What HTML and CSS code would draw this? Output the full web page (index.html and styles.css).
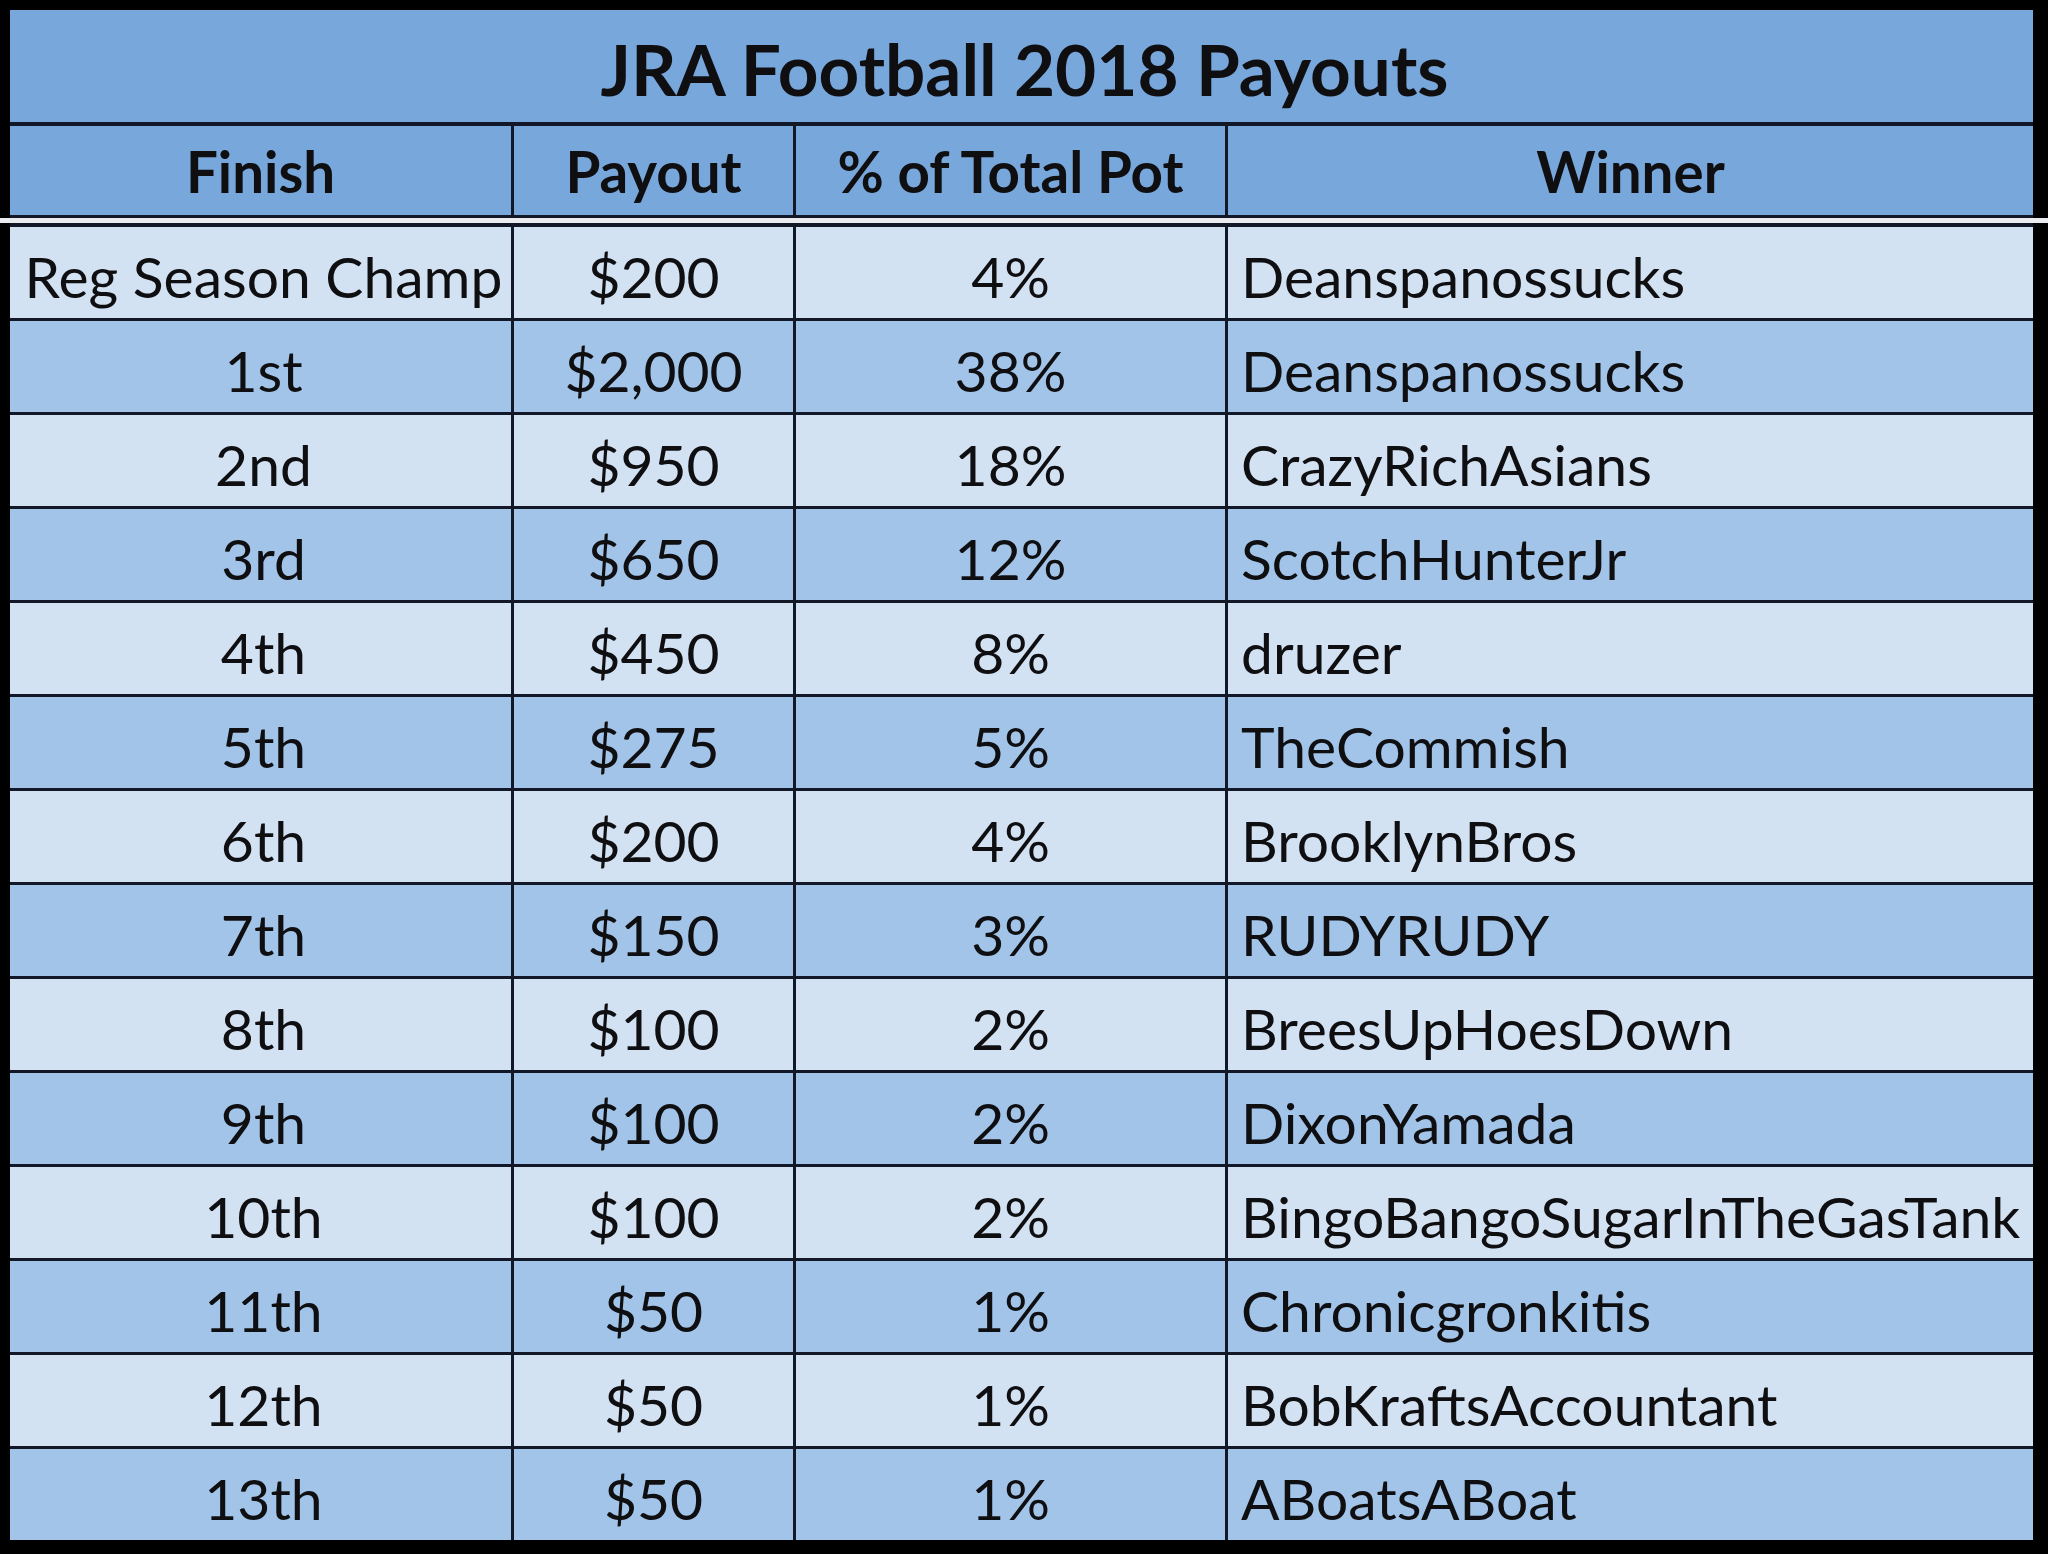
FILE: index.html
```html
<!DOCTYPE html>
<html>
<head>
<meta charset="utf-8">
<title>JRA Football 2018 Payouts</title>
<link rel="stylesheet" href="styles.css">
</head>
<body>
<div class="sheet">
  <div class="top">
    <div class="title">JRA Football 2018 Payouts</div>
    <div class="grid hdr">
      <div class="cell">Finish</div>
      <div class="cell">Payout</div>
      <div class="cell">% of Total Pot</div>
      <div class="cell">Winner</div>
    </div>
  </div>
  <div class="sep"></div>
  <div class="body">
    <div class="rows">
      <div class="grid row light"><div class="cell first">Reg Season Champ</div><div class="cell">$200</div><div class="cell">4%</div><div class="cell name">Deanspanossucks</div></div>
      <div class="grid row dark"><div class="cell first">1st</div><div class="cell">$2,000</div><div class="cell">38%</div><div class="cell name">Deanspanossucks</div></div>
      <div class="grid row light"><div class="cell first">2nd</div><div class="cell">$950</div><div class="cell">18%</div><div class="cell name">CrazyRichAsians</div></div>
      <div class="grid row dark"><div class="cell first">3rd</div><div class="cell">$650</div><div class="cell">12%</div><div class="cell name">ScotchHunterJr</div></div>
      <div class="grid row light"><div class="cell first">4th</div><div class="cell">$450</div><div class="cell">8%</div><div class="cell name">druzer</div></div>
      <div class="grid row dark"><div class="cell first">5th</div><div class="cell">$275</div><div class="cell">5%</div><div class="cell name">TheCommish</div></div>
      <div class="grid row light"><div class="cell first">6th</div><div class="cell">$200</div><div class="cell">4%</div><div class="cell name">BrooklynBros</div></div>
      <div class="grid row dark"><div class="cell first">7th</div><div class="cell">$150</div><div class="cell">3%</div><div class="cell name">RUDYRUDY</div></div>
      <div class="grid row light"><div class="cell first">8th</div><div class="cell">$100</div><div class="cell">2%</div><div class="cell name">BreesUpHoesDown</div></div>
      <div class="grid row dark"><div class="cell first">9th</div><div class="cell">$100</div><div class="cell">2%</div><div class="cell name">DixonYamada</div></div>
      <div class="grid row light"><div class="cell first">10th</div><div class="cell">$100</div><div class="cell">2%</div><div class="cell name">BingoBangoSugarInTheGasTank</div></div>
      <div class="grid row dark"><div class="cell first">11th</div><div class="cell">$50</div><div class="cell">1%</div><div class="cell name">Chronicgronkitis</div></div>
      <div class="grid row light"><div class="cell first">12th</div><div class="cell">$50</div><div class="cell">1%</div><div class="cell name">BobKraftsAccountant</div></div>
      <div class="grid row dark"><div class="cell first">13th</div><div class="cell">$50</div><div class="cell">1%</div><div class="cell name">ABoatsABoat</div></div>
    </div>
  </div>
</div>
</body>
</html>
```

FILE: styles.css
```css
html, body {
  margin: 0;
  padding: 0;
  background: #000;
}

.sheet {
  width: 2048px;
  height: 1554px;
  display: flex;
  flex-direction: column;
  background: #000;
  font-family: Lato, "Open Sans", "Liberation Sans", sans-serif;
  color: #0f0f12;
  overflow: hidden;
}

.top {
  margin: 10px 15px 0 10px;
  display: flex;
  flex-direction: column;
  gap: 4px;
  padding-bottom: 3px;
  background: #121827;
}

.title {
  height: 112px;
  background: #78a7db;
  display: flex;
  align-items: center;
  justify-content: center;
  font-weight: 700;
  font-size: 71px;
  padding-top: 5px;
  padding-left: 6px;
  box-sizing: border-box;
}

.grid {
  display: grid;
  grid-template-columns: 501px 279px 429px 805px;
  column-gap: 3px;
}

.hdr {
  height: 89px;
}

.hdr .cell {
  background: #78a7db;
  font-weight: 700;
  font-size: 56.5px;
  padding-top: 1px;
}

.cell {
  display: flex;
  align-items: center;
  justify-content: center;
  white-space: nowrap;
  overflow: visible;
  padding-top: 6px;
  box-sizing: border-box;
}

.sep {
  height: 5px;
  background: #e9ebef;
}

.body {
  flex: 1;
  padding: 0 15px 14px 10px;
}

.rows {
  display: flex;
  flex-direction: column;
  gap: 3px;
  padding-top: 4px;
  background: #121827;
}

.row {
  height: 91px;
  font-size: 57px;
}

.row.light .cell {
  background: #d3e2f3;
}

.row.dark .cell {
  background: #a2c4e9;
}

.row .cell.first {
  padding-left: 6px;
}

.row .cell.name {
  justify-content: flex-start;
  padding-left: 13px;
}
```
